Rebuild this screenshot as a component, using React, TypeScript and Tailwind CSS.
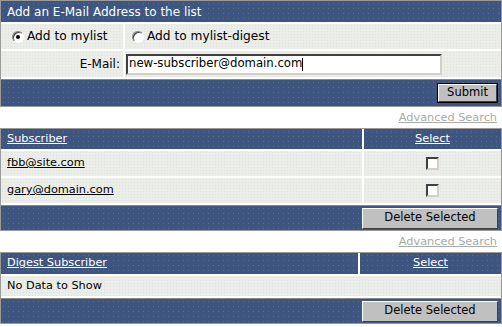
import React from 'react';

const font = { fontFamily: '"DejaVu Sans", Verdana, sans-serif' };

function Radio({ checked }: { checked?: boolean }) {
  return (
    <span className="relative inline-block w-[12px] h-[12px] rounded-full bg-white border border-t-[#808080] border-l-[#808080] border-b-white border-r-white shadow-[inset_1px_1px_0_#404040]">
      {checked && <span className="absolute left-[3px] top-[3px] w-[4px] h-[4px] rounded-full bg-black" />}
    </span>
  );
}

function Checkbox() {
  return (
    <span className="inline-block w-[13px] h-[13px] bg-white border-2 border-t-[#404040] border-l-[#404040] border-b-[#d4d0c8] border-r-[#d4d0c8]" />
  );
}

function Button({ label, wide, focused }: { label: string; wide?: boolean; focused?: boolean }) {
  return (
    <span className={`inline-flex ${focused ? 'border border-black' : ''}`}>
      <span
        className={`inline-flex items-center justify-center bg-[#c0c0c0] text-black border border-t-white border-l-white border-b-[#404040] border-r-[#404040] ${
          wide ? 'w-[136px] h-[21px] text-[11.5px]' : 'w-[59px] h-[18px] text-[11.5px]'
        }`}
      >
        {label}
      </span>
    </span>
  );
}

const blue = 'bg-[#3e5580] bg-[radial-gradient(#56709c_0.6px,transparent_0.7px)] bg-[length:5px_5px]';
const light = 'bg-[#ebeee8] bg-[radial-gradient(#dde1da_0.6px,transparent_0.7px)] bg-[length:3px_3px]';

function AdvancedSearch() {
  return (
    <div className="flex justify-end items-end pr-[5px] pb-[1px] h-[21px]">
      <a className="text-[11.3px] text-[#a9aaa6] underline">Advanced Search</a>
    </div>
  );
}

export default function App() {
  return (
    <div className="w-[502px] h-[327px] bg-white text-[11.3px] text-black" style={font}>
      {/* add address */}
      <div className="border border-[#9a9a9a] bg-white flex flex-col gap-[2px]">
        <div className={`${blue} h-[21px] flex items-center pl-[6px] text-white text-[12px]`}>Add an E-Mail Address to the list</div>
        <div className="flex gap-[2px] h-[25px] text-[12.2px]">
          <div className={`${light} w-[122px] flex items-center gap-[3px] pl-[11px]`}>
            <Radio checked />
            <span>Add to mylist</span>
          </div>
          <div className={`${light} flex-1 flex items-center gap-[3px] pl-[7px]`}>
            <Radio />
            <span>Add to mylist-digest</span>
          </div>
        </div>
        <div className="flex gap-[2px] h-[26px]">
          <div className={`${light} w-[122px] flex items-center justify-end pr-[3px] text-[12px]`}>E-Mail:</div>
          <div className={`${light} flex-1 flex items-center pl-[1px]`}>
            <div className="w-[316px] h-[21px] bg-white border-2 border-t-[#404040] border-l-[#404040] border-b-[#d4d0c8] border-r-[#d4d0c8] flex items-center pl-[1px] text-[11.7px]">
              <span>new-subscriber@domain.com</span>
              <span className="w-px h-[13px] bg-black" />
            </div>
          </div>
        </div>
        <div className={`${blue} h-[27px] flex items-center justify-end pr-[3px] border-t border-[#8a8a8a]`}>
          <Button label="Submit" focused />
        </div>
      </div>

      <AdvancedSearch />

      {/* subscribers */}
      <div className="border border-[#9a9a9a] bg-white flex flex-col gap-[2px]">
        <div className="flex gap-[2px] h-[20px]">
          <div className={`${blue} flex-1 flex items-center pl-[6px]`}>
            <a className="text-white underline">Subscriber</a>
          </div>
          <div className={`${blue} w-[137px] flex items-center justify-center`}>
            <a className="text-white underline">Select</a>
          </div>
        </div>
        {['fbb@site.com', 'gary@domain.com'].map((e) => (
          <div key={e} className="flex gap-[2px] h-[25px]">
            <div className={`${light} flex-1 flex items-center pl-[6px]`}>
              <a className="underline">{e}</a>
            </div>
            <div className={`${light} w-[137px] flex items-center justify-center`}>
              <Checkbox />
            </div>
          </div>
        ))}
        <div className={`${blue} h-[25px] flex items-center justify-end pr-[3px] border-t border-[#8a8a8a]`}>
          <Button label="Delete Selected" wide />
        </div>
      </div>

      <AdvancedSearch />

      {/* digest */}
      <div className="border border-[#9a9a9a] bg-white flex flex-col gap-[2px]">
        <div className="flex gap-[2px] h-[21px]">
          <div className={`${blue} flex-1 flex items-center pl-[6px]`}>
            <a className="text-white underline">Digest Subscriber</a>
          </div>
          <div className={`${blue} w-[141px] flex items-center justify-center`}>
            <a className="text-white underline">Select</a>
          </div>
        </div>
        <div className={`${light} h-[20px] flex items-center pl-[6px]`}>No Data to Show</div>
        <div className={`${blue} h-[25px] flex items-center justify-end pr-[3px] border-t border-[#8a8a8a]`}>
          <Button label="Delete Selected" wide />
        </div>
      </div>
    </div>
  );
}
